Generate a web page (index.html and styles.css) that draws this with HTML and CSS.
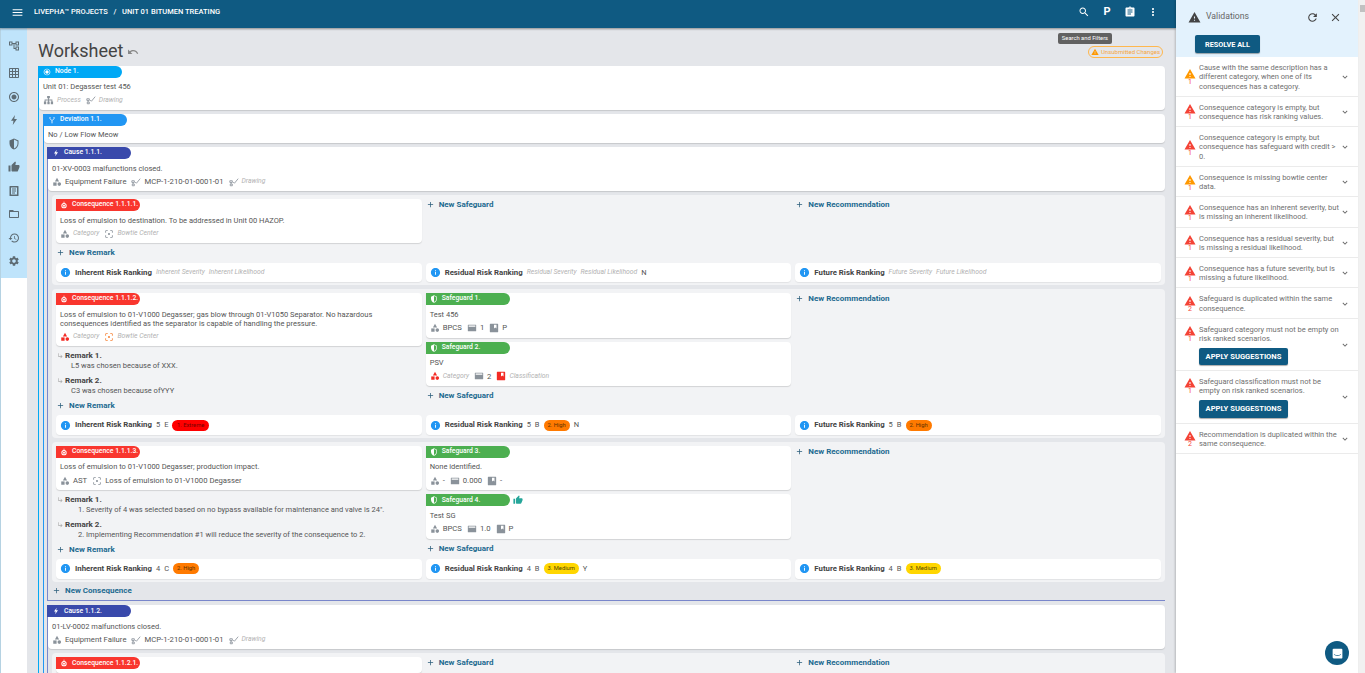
FILE: index.html
```html
<!DOCTYPE html>
<html>
<head>
    <meta charset="utf-8">
    <title>Worksheet</title>
    <link rel="stylesheet" href="styles.css">
</head>

<body>
    <svg class="defs" xmlns="http://www.w3.org/2000/svg">
        <symbol id="menu" viewBox="0 0 24 24"><path d="M3 18h18v-2H3v2zm0-5h18v-2H3v2zm0-7v2h18V6H3z"/></symbol>
        <symbol id="search" viewBox="0 0 24 24"><path d="M15.5 14h-.79l-.28-.27C15.41 12.59 16 11.11 16 9.5 16 5.91 13.09 3 9.5 3S3 5.91 3 9.5 5.91 16 9.5 16c1.61 0 3.09-.59 4.23-1.57l.27.28v.79l5 4.99L20.49 19l-4.99-5zm-6 0C7.01 14 5 11.99 5 9.5S7.01 5 9.5 5 14 7.01 14 9.5 11.99 14 9.5 14z"/></symbol>
        <symbol id="more" viewBox="0 0 24 24"><path d="M12 8c1.1 0 2-.9 2-2s-.9-2-2-2-2 .9-2 2 .9 2 2 2zm0 2c-1.1 0-2 .9-2 2s.9 2 2 2 2-.9 2-2-.9-2-2-2zm0 6c-1.1 0-2 .9-2 2s.9 2 2 2 2-.9 2-2-.9-2-2-2z"/></symbol>
        <symbol id="clip" viewBox="0 0 24 24"><path d="M19 3h-4.18C14.4 1.84 13.3 1 12 1c-1.3 0-2.4.84-2.82 2H5c-1.1 0-2 .9-2 2v14c0 1.1.9 2 2 2h14c1.1 0 2-.9 2-2V5c0-1.1-.9-2-2-2zm-7 0c.55 0 1 .45 1 1s-.45 1-1 1-1-.45-1-1 .45-1 1-1zm2 14H7v-2h7v2zm3-4H7v-2h10v2zm0-4H7V7h10v2z"/></symbol>
        <symbol id="warn" viewBox="0 0 24 24"><path d="M1 21h22L12 2 1 21zm12-3h-2v-2h2v2zm0-4h-2v-4h2v4z"/></symbol>
        <symbol id="refresh" viewBox="0 0 24 24"><path d="M17.65 6.35C16.2 4.9 14.21 4 12 4c-4.42 0-7.99 3.58-7.99 8s3.57 8 7.99 8c3.73 0 6.84-2.55 7.73-6h-2.08c-.82 2.33-3.04 4-5.65 4-3.31 0-6-2.69-6-6s2.69-6 6-6c1.66 0 3.14.69 4.22 1.78L13 11h7V4l-2.35 2.35z"/></symbol>
        <symbol id="close" viewBox="0 0 24 24"><path d="M19 6.41L17.59 5 12 10.59 6.41 5 5 6.41 10.59 12 5 17.59 6.41 19 12 13.41 17.59 19 19 17.59 13.41 12 19 6.41z"/></symbol>
        <symbol id="chev" viewBox="0 0 24 24"><path d="M16.59 8.59L12 13.17 7.41 8.59 6 10l6 6 6-6z"/></symbol>
        <symbol id="add" viewBox="0 0 24 24"><path d="M19 13h-6v6h-2v-6H5v-2h6V5h2v6h6v2z"/></symbol>
        <symbol id="info" viewBox="0 0 24 24"><path d="M12 2C6.48 2 2 6.48 2 12s4.48 10 10 10 10-4.48 10-10S17.52 2 12 2zm1 15h-2v-6h2v6zm0-8h-2V7h2v2z"/></symbol>
        <symbol id="thumb" viewBox="0 0 24 24"><path d="M1 21h4V9H1v12zm22-11c0-1.1-.9-2-2-2h-6.31l.95-4.57.03-.32c0-.41-.17-.79-.44-1.06L14.17 1 7.59 7.59C7.22 7.95 7 8.45 7 9v10c0 1.1.9 2 2 2h9c.83 0 1.54-.5 1.84-1.22l3.02-7.05c.09-.23.14-.47.14-.73v-2z"/></symbol>
        <symbol id="undo" viewBox="0 0 24 24"><path d="M12.5 8c-2.65 0-5.05.99-6.9 2.6L2 7v9h9l-3.62-3.62c1.39-1.16 3.16-1.88 5.12-1.88 3.54 0 6.55 2.31 7.6 5.5l2.37-.78C21.08 11.03 17.15 8 12.5 8z"/></symbol>
        <symbol id="bolt" viewBox="0 0 24 24"><path d="M14 2L6 13.500h5L9.500 22 18 10h-5.500z"/></symbol>
        <symbol id="history" viewBox="0 0 24 24"><path d="M13 3c-4.97 0-9 4.03-9 9H1l3.89 3.89.07.14L9 12H6c0-3.87 3.13-7 7-7s7 3.13 7 7-3.13 7-7 7c-1.93 0-3.68-.79-4.94-2.06l-1.42 1.42C8.27 19.99 10.51 21 13 21c4.97 0 9-4.03 9-9s-4.03-9-9-9zm-1 5v5l4.28 2.54.72-1.21-3.5-2.08V8H12z"/></symbol>
        <symbol id="folder" viewBox="0 0 24 24"><path d="M20 6h-8l-2-2H4c-1.1 0-1.99.9-1.99 2L2 18c0 1.1.9 2 2 2h16c1.1 0 2-.9 2-2V8c0-1.1-.9-2-2-2zm0 12H4V8h16v10z"/></symbol>
        <symbol id="grid" viewBox="0 0 24 24"><path d="M20 2H4c-1.1 0-2 .9-2 2v16c0 1.1.9 2 2 2h16c1.1 0 2-.9 2-2V4c0-1.1-.9-2-2-2zM8 20H4v-4h4v4zm0-6H4v-4h4v4zm0-6H4V4h4v4zm6 12h-4v-4h4v4zm0-6h-4v-4h4v4zm0-6h-4V4h4v4zm6 12h-4v-4h4v4zm0-6h-4v-4h4v4zm0-6h-4V4h4v4z"/></symbol>
        <symbol id="radio" viewBox="0 0 24 24"><path d="M12 7c-2.76 0-5 2.24-5 5s2.24 5 5 5 5-2.24 5-5-2.24-5-5-5zm0-5C6.48 2 2 6.48 2 12s4.48 10 10 10 10-4.48 10-10S17.52 2 12 2zm0 18c-4.42 0-8-3.58-8-8s3.58-8 8-8 8 3.58 8 8-3.58 8-8 8z"/></symbol>
        <symbol id="shield" viewBox="0 0 24 24"><path fill-rule="evenodd" d="M12 1L3 5v6c0 5.55 3.84 10.74 9 12 5.16-1.26 9-6.45 9-12V5l-9-4zm0 2.2v17.7c4-1.2 7-5.4 7-9.9V6.3z"/></symbol>
        <symbol id="tree" viewBox="0 0 24 24"><path d="M22 11V3h-7v3H9V3H2v8h7V8h2v10h4v3h7v-8h-7v3h-2V8h2v3zM4 5h3v4H4zm13 10h3v4h-3zm0-10h3v4h-3z" fill-rule="evenodd"/></symbol>
        <symbol id="book" viewBox="0 0 24 24"><path fill-rule="evenodd" d="M4 2h16a1 1 0 0 1 1 1v18a1 1 0 0 1-1 1H4a1 1 0 0 1-1-1V3a1 1 0 0 1 1-1zm2 3v14h12V5zm2 2h8v2H8zm0 4h8v2H8zm0 4h6v2H8z"/></symbol>
        <symbol id="gear" viewBox="0 0 24 24"><path d="M19.14 12.94c.04-.3.06-.61.06-.94 0-.32-.02-.64-.07-.94l2.03-1.58c.18-.14.23-.41.12-.61l-1.92-3.32c-.12-.22-.37-.29-.59-.22l-2.39.96c-.5-.38-1.03-.7-1.62-.94l-.36-2.54c-.04-.24-.24-.41-.48-.41h-3.84c-.24 0-.43.17-.47.41l-.36 2.54c-.59.24-1.13.57-1.62.94l-2.39-.96c-.22-.08-.47 0-.59.22L2.74 8.87c-.12.21-.08.47.12.61l2.03 1.58c-.05.3-.09.63-.09.94s.02.64.07.94l-2.03 1.58c-.18.14-.23.41-.12.61l1.92 3.32c.12.22.37.29.59.22l2.39-.96c.5.38 1.03.7 1.62.94l.36 2.54c.05.24.24.41.48.41h3.84c.24 0 .44-.17.47-.41l.36-2.54c.59-.24 1.13-.56 1.62-.94l2.39.96c.22.08.47 0 .59-.22l1.92-3.32c.12-.22.07-.47-.12-.61l-2.01-1.58zM12 15.6c-1.98 0-3.6-1.62-3.6-3.6s1.62-3.6 3.6-3.6 3.6 1.62 3.6 3.6-1.62 3.6-3.6 3.6z"/></symbol>
        <symbol id="cat" viewBox="0 0 24 24"><path d="M12 2l-5 8.500h10z"/><rect x="3" y="13" width="8" height="8"/><circle cx="17.500" cy="17" r="4.300"/></symbol>
        <symbol id="sitemap" viewBox="0 0 24 24"><path d="M9 2h6v5h-2v3h7.500v4H22v6h-5v-6h1.500v-2H13v2h1.500v6h-5v-6H11v-2H5.500v2H7v6H2v-6h1.500v-4H11V7H9z"/></symbol>
        <symbol id="draw" viewBox="0 0 24 24"><path fill="none" stroke="currentColor" stroke-width="2" d="M2 9h6v4H2zM5 13v4M3 17h5v4H3zM10 12l3 3 9-11"/></symbol>
        <symbol id="focus" viewBox="0 0 24 24"><path d="M12 9.500a2.500 2.500 0 1 0 0 5 2.500 2.500 0 0 0 0-5zM5 15H3v4c0 1.100.9 2 2 2h4v-2H5v-4zM5 5h4V3H5c-1.100 0-2 .9-2 2v4h2V5zm14-2h-4v2h4v4h2V5c0-1.100-.9-2-2-2zm0 16h-4v2h4c1.100 0 2-.9 2-2v-4h-2v4z"/></symbol>
        <symbol id="card" viewBox="0 0 24 24"><path fill-rule="evenodd" d="M3 4h18a1 1 0 0 1 1 1v14a1 1 0 0 1-1 1H3a1 1 0 0 1-1-1V5a1 1 0 0 1 1-1zm1 2v3h16V6z"/></symbol>
        <symbol id="class" viewBox="0 0 24 24"><path fill-rule="evenodd" d="M3 2h18a1 1 0 0 1 1 1v18a1 1 0 0 1-1 1H3a1 1 0 0 1-1-1V3a1 1 0 0 1 1-1zm9 2v9l3-2 3 2V4z"/></symbol>
        <symbol id="fork" viewBox="0 0 24 24"><path fill="none" stroke="currentColor" stroke-width="2.500" d="M6 3v5l6 6v8M18 3v5l-6 6"/></symbol>
        <symbol id="bomb" viewBox="0 0 24 24"><path fill-rule="evenodd" d="M12 6a8 8 0 1 1 0 16 8 8 0 0 1 0-16zm0 3a5 5 0 1 0 0 10 5 5 0 0 0 0-10zm-1.500-7h3v3h-3zM12 11a3 3 0 1 1 0 6 3 3 0 0 1 0-6z"/></symbol>
        <symbol id="remark" viewBox="0 0 24 24"><path d="M19 15l-6 6-1.420-1.420L15.170 16H4V4h2v10h9.170l-3.590-3.580L13 9l6 6z"/></symbol>
        <symbol id="chat" viewBox="0 0 24 24"><path fill-rule="evenodd" d="M5 3h14a2 2 0 0 1 2 2v15a1 1 0 0 1-1 1H5a2 2 0 0 1-2-2V5a2 2 0 0 1 2-2zm1 10.500l-.7 1c3.800 2.600 9.600 2.600 13.400 0l-.7-1c-3.400 2.200-8.600 2.200-12 0z"/></symbol>
    </svg>

    <div class="main">
        <header class="top">
            <svg class="i menu"><use href="#menu"/></svg>
            <div class="crumb">LIVEPHA™ PROJECTS &nbsp;&nbsp;/&nbsp;&nbsp; UNIT 01 BITUMEN TREATING</div>
            <div class="top-acts">
                <svg class="i"><use href="#search"/></svg>
                <b class="pee">P</b>
                <svg class="i"><use href="#clip"/></svg>
                <svg class="i"><use href="#more"/></svg>
            </div>
        </header>
        <div class="tip">Search and Filters</div>

        <div class="below">
            <aside class="side">
                <nav class="side-in">
                    <svg class="i"><use href="#tree"/></svg>
                    <svg class="i"><use href="#grid"/></svg>
                    <svg class="i"><use href="#radio"/></svg>
                    <svg class="i"><use href="#bolt"/></svg>
                    <svg class="i"><use href="#shield"/></svg>
                    <svg class="i"><use href="#thumb"/></svg>
                    <svg class="i"><use href="#book"/></svg>
                    <svg class="i"><use href="#folder"/></svg>
                    <svg class="i"><use href="#history"/></svg>
                    <svg class="i"><use href="#gear"/></svg>
                </nav>
            </aside>

            <main class="sheet">
                <div class="title-row">
                    <h1>Worksheet</h1>
                    <svg class="i undo"><use href="#undo"/></svg>
                    <div class="unsub"><svg class="i"><use href="#warn"/></svg>Unsubmitted Changes</div>
                </div>

                <section class="node">
                    <div class="card">
                        <div class="tag t-node"><svg class="i"><use href="#radio"/></svg>Node 1.</div>
                        <div class="txt">Unit 01: Degasser test 456</div>
                        <div class="meta">
                            <svg class="i big"><use href="#sitemap"/></svg><em>Process</em>
                            <svg class="i"><use href="#draw"/></svg><em>Drawing</em>
                        </div>
                    </div>

                    <section class="dev">
                        <div class="card">
                            <div class="tag t-dev"><svg class="i"><use href="#fork"/></svg>Deviation 1.1.</div>
                            <div class="txt">No / Low Flow Meow</div>
                        </div>

                        <section class="cause">
                            <div class="card">
                                <div class="tag t-cause"><svg class="i"><use href="#bolt"/></svg>Cause 1.1.1.</div>
                                <div class="txt">01-XV-0003 malfunctions closed.</div>
                                <div class="meta">
                                    <svg class="i"><use href="#cat"/></svg><span>Equipment Failure</span>
                                    <svg class="i"><use href="#draw"/></svg><span>MCP-1-210-01-0001-01</span>
                                    <svg class="i"><use href="#draw"/></svg><em>Drawing</em>
                                </div>
                            </div>

                            <div class="group">
                                <div class="col">
                                    <div class="card">
                                        <div class="tag t-cons"><svg class="i"><use href="#bomb"/></svg>Consequence 1.1.1.1.</div>
                                        <div class="txt">Loss of emulsion to destination. To be addressed in Unit 00 HAZOP.</div>
                                        <div class="meta">
                                            <svg class="i"><use href="#cat"/></svg><em>Category</em>
                                            <svg class="i"><use href="#focus"/></svg><em>Bowtie Center</em>
                                        </div>
                                    </div>
                                    <div class="new"><svg class="i"><use href="#add"/></svg>New Remark</div>
                                </div>
                                <div class="col">
                                    <div class="new first"><svg class="i"><use href="#add"/></svg>New Safeguard</div>
                                </div>
                                <div class="col">
                                    <div class="new first"><svg class="i"><use href="#add"/></svg>New Recommendation</div>
                                </div>
                                <div class="risk"><svg class="i"><use href="#info"/></svg><b>Inherent Risk Ranking</b><em>Inherent Severity</em><em>Inherent Likelihood</em></div>
                                <div class="risk"><svg class="i"><use href="#info"/></svg><b>Residual Risk Ranking</b><em>Residual Severity</em><em>Residual Likelihood</em><span>N</span></div>
                                <div class="risk"><svg class="i"><use href="#info"/></svg><b>Future Risk Ranking</b><em>Future Severity</em><em>Future Likelihood</em></div>
                            </div>

                            <div class="group">
                                <div class="col">
                                    <div class="card">
                                        <div class="tag t-cons"><svg class="i"><use href="#bomb"/></svg>Consequence 1.1.1.2.</div>
                                        <div class="txt">Loss of emulsion to 01-V1000 Degasser; gas blow through 01-V1050 Separator. No hazardous consequences identified as the separator is capable of handling the pressure.</div>
                                        <div class="meta">
                                            <svg class="i red"><use href="#cat"/></svg><em>Category</em>
                                            <svg class="i orange"><use href="#focus"/></svg><em>Bowtie Center</em>
                                        </div>
                                    </div>
                                    <div class="remark">
                                        <div class="rem-head"><svg class="i"><use href="#remark"/></svg>Remark 1.</div>
                                        <div class="rem-body">L5 was chosen because of XXX.</div>
                                    </div>
                                    <div class="remark">
                                        <div class="rem-head"><svg class="i"><use href="#remark"/></svg>Remark 2.</div>
                                        <div class="rem-body">C3 was chosen because ofYYY</div>
                                    </div>
                                    <div class="new"><svg class="i"><use href="#add"/></svg>New Remark</div>
                                </div>
                                <div class="col">
                                    <div class="card sg">
                                        <div class="tag t-safe"><svg class="i"><use href="#shield"/></svg>Safeguard 1.</div>
                                        <div class="txt">Test 456</div>
                                        <div class="meta">
                                            <svg class="i"><use href="#cat"/></svg><span>BPCS</span>
                                            <svg class="i"><use href="#card"/></svg><span>1</span>
                                            <svg class="i"><use href="#class"/></svg><span>P</span>
                                        </div>
                                    </div>
                                    <div class="card sg">
                                        <div class="tag t-safe"><svg class="i"><use href="#shield"/></svg>Safeguard 2.</div>
                                        <div class="txt">PSV</div>
                                        <div class="meta">
                                            <svg class="i red"><use href="#cat"/></svg><em>Category</em>
                                            <svg class="i"><use href="#card"/></svg><span>2</span>
                                            <svg class="i red"><use href="#class"/></svg><em>Classification</em>
                                        </div>
                                    </div>
                                    <div class="new"><svg class="i"><use href="#add"/></svg>New Safeguard</div>
                                </div>
                                <div class="col">
                                    <div class="new first"><svg class="i"><use href="#add"/></svg>New Recommendation</div>
                                </div>
                                <div class="risk"><svg class="i"><use href="#info"/></svg><b>Inherent Risk Ranking</b><span>5</span><span>E</span><i class="pill p-ext">1. Extreme</i></div>
                                <div class="risk"><svg class="i"><use href="#info"/></svg><b>Residual Risk Ranking</b><span>5</span><span>B</span><i class="pill p-high">2. High</i><span>N</span></div>
                                <div class="risk"><svg class="i"><use href="#info"/></svg><b>Future Risk Ranking</b><span>5</span><span>B</span><i class="pill p-high">2. High</i></div>
                            </div>

                            <div class="group">
                                <div class="col">
                                    <div class="card">
                                        <div class="tag t-cons"><svg class="i"><use href="#bomb"/></svg>Consequence 1.1.1.3.</div>
                                        <div class="txt">Loss of emulsion to 01-V1000 Degasser; production impact.</div>
                                        <div class="meta">
                                            <svg class="i"><use href="#cat"/></svg><span>AST</span>
                                            <svg class="i"><use href="#focus"/></svg><span>Loss of emulsion to 01-V1000 Degasser</span>
                                        </div>
                                    </div>
                                    <div class="remark">
                                        <div class="rem-head"><svg class="i"><use href="#remark"/></svg>Remark 1.</div>
                                        <div class="rem-body num">1. Severity of 4 was selected based on no bypass available for maintenance and valve is 24".</div>
                                    </div>
                                    <div class="remark">
                                        <div class="rem-head"><svg class="i"><use href="#remark"/></svg>Remark 2.</div>
                                        <div class="rem-body num">2. Implementing Recommendation #1 will reduce the severity of the consequence to 2.</div>
                                    </div>
                                    <div class="new"><svg class="i"><use href="#add"/></svg>New Remark</div>
                                </div>
                                <div class="col">
                                    <div class="card sg">
                                        <div class="tag t-safe"><svg class="i"><use href="#shield"/></svg>Safeguard 3.</div>
                                        <div class="txt">None identified.</div>
                                        <div class="meta">
                                            <svg class="i"><use href="#cat"/></svg><span>-</span>
                                            <svg class="i"><use href="#card"/></svg><span>0.000</span>
                                            <svg class="i"><use href="#class"/></svg><span>-</span>
                                        </div>
                                    </div>
                                    <div class="card sg">
                                        <div class="tag-row">
                                            <div class="tag t-safe"><svg class="i"><use href="#shield"/></svg>Safeguard 4.</div>
                                            <svg class="i like"><use href="#thumb"/></svg>
                                        </div>
                                        <div class="txt">Test SG</div>
                                        <div class="meta">
                                            <svg class="i"><use href="#cat"/></svg><span>BPCS</span>
                                            <svg class="i"><use href="#card"/></svg><span>1.0</span>
                                            <svg class="i"><use href="#class"/></svg><span>P</span>
                                        </div>
                                    </div>
                                    <div class="new"><svg class="i"><use href="#add"/></svg>New Safeguard</div>
                                </div>
                                <div class="col">
                                    <div class="new first"><svg class="i"><use href="#add"/></svg>New Recommendation</div>
                                </div>
                                <div class="risk"><svg class="i"><use href="#info"/></svg><b>Inherent Risk Ranking</b><span>4</span><span>C</span><i class="pill p-high">2. High</i></div>
                                <div class="risk"><svg class="i"><use href="#info"/></svg><b>Residual Risk Ranking</b><span>4</span><span>B</span><i class="pill p-med">3. Medium</i><span>Y</span></div>
                                <div class="risk"><svg class="i"><use href="#info"/></svg><b>Future Risk Ranking</b><span>4</span><span>B</span><i class="pill p-med">3. Medium</i></div>
                            </div>

                            <div class="new new-cons"><svg class="i"><use href="#add"/></svg>New Consequence</div>
                        </section>

                        <section class="cause">
                            <div class="card">
                                <div class="tag t-cause"><svg class="i"><use href="#bolt"/></svg>Cause 1.1.2.</div>
                                <div class="txt">01-LV-0002 malfunctions closed.</div>
                                <div class="meta">
                                    <svg class="i"><use href="#cat"/></svg><span>Equipment Failure</span>
                                    <svg class="i"><use href="#draw"/></svg><span>MCP-1-210-01-0001-01</span>
                                    <svg class="i"><use href="#draw"/></svg><em>Drawing</em>
                                </div>
                            </div>

                            <div class="group">
                                <div class="col">
                                    <div class="card">
                                        <div class="tag t-cons"><svg class="i"><use href="#bomb"/></svg>Consequence 1.1.2.1.</div>
                                    </div>
                                </div>
                                <div class="col">
                                    <div class="new first"><svg class="i"><use href="#add"/></svg>New Safeguard</div>
                                </div>
                                <div class="col">
                                    <div class="new first"><svg class="i"><use href="#add"/></svg>New Recommendation</div>
                                </div>
                            </div>
                        </section>
                    </section>
                </section>
            </main>
        </div>
    </div>

    <aside class="panel">
        <div class="panel-head">
            <div class="panel-title">
                <svg class="i"><use href="#warn"/></svg>
                <span>Validations</span>
                <svg class="i acts"><use href="#refresh"/></svg>
                <svg class="i"><use href="#close"/></svg>
            </div>
            <button class="btn resolve">RESOLVE ALL</button>
        </div>
        <div class="val">
            <div class="v-ico amber"><svg class="i"><use href="#warn"/></svg><small>1</small></div>
            <div class="v-txt">Cause with the same description has a different category, when one of its consequences has a category.</div>
            <svg class="i chev"><use href="#chev"/></svg>
        </div>
        <div class="val">
            <div class="v-ico"><svg class="i"><use href="#warn"/></svg><small>1</small></div>
            <div class="v-txt">Consequence category is empty, but consequence has risk ranking values.</div>
            <svg class="i chev"><use href="#chev"/></svg>
        </div>
        <div class="val">
            <div class="v-ico"><svg class="i"><use href="#warn"/></svg><small>1</small></div>
            <div class="v-txt">Consequence category is empty, but consequence has safeguard with credit &gt; 0.</div>
            <svg class="i chev"><use href="#chev"/></svg>
        </div>
        <div class="val">
            <div class="v-ico amber"><svg class="i"><use href="#warn"/></svg><small>1</small></div>
            <div class="v-txt">Consequence is missing bowtie center data.</div>
            <svg class="i chev"><use href="#chev"/></svg>
        </div>
        <div class="val">
            <div class="v-ico"><svg class="i"><use href="#warn"/></svg><small>1</small></div>
            <div class="v-txt">Consequence has an inherent severity, but is missing an inherent likelihood.</div>
            <svg class="i chev"><use href="#chev"/></svg>
        </div>
        <div class="val">
            <div class="v-ico"><svg class="i"><use href="#warn"/></svg><small>1</small></div>
            <div class="v-txt">Consequence has a residual severity, but is missing a residual likelihood.</div>
            <svg class="i chev"><use href="#chev"/></svg>
        </div>
        <div class="val">
            <div class="v-ico"><svg class="i"><use href="#warn"/></svg><small>1</small></div>
            <div class="v-txt">Consequence has a future severity, but is missing a future likelihood.</div>
            <svg class="i chev"><use href="#chev"/></svg>
        </div>
        <div class="val">
            <div class="v-ico"><svg class="i"><use href="#warn"/></svg><small>2</small></div>
            <div class="v-txt">Safeguard is duplicated within the same consequence.</div>
            <svg class="i chev"><use href="#chev"/></svg>
        </div>
        <div class="val has-btn">
            <div class="v-ico"><svg class="i"><use href="#warn"/></svg><small>1</small></div>
            <div class="v-txt">Safeguard category must not be empty on risk ranked scenarios.<button class="btn apply">APPLY SUGGESTIONS</button></div>
            <svg class="i chev"><use href="#chev"/></svg>
        </div>
        <div class="val has-btn">
            <div class="v-ico"><svg class="i"><use href="#warn"/></svg><small>1</small></div>
            <div class="v-txt">Safeguard classification must not be empty on risk ranked scenarios.<button class="btn apply">APPLY SUGGESTIONS</button></div>
            <svg class="i chev"><use href="#chev"/></svg>
        </div>
        <div class="val">
            <div class="v-ico"><svg class="i"><use href="#warn"/></svg><small>2</small></div>
            <div class="v-txt">Recommendation is duplicated within the same consequence.</div>
            <svg class="i chev"><use href="#chev"/></svg>
        </div>
    </aside>

    <div class="scroll"><div class="thumb"></div></div>
    <div class="fab"><svg class="i"><use href="#chat"/></svg></div>
</body>

</html>
```

FILE: styles.css
```css
* { box-sizing: border-box; }

html, body {
    margin: 0;
    height: 673px;
    overflow: hidden;
}

body {
    display: flex;
    font-family: Roboto, "Liberation Sans", sans-serif;
    font-size: 7.500px;
    line-height: 9.300px;
    color: #555;
    background: #fff;
}

.defs { display: none; }

.i {
    width: 10px;
    height: 10px;
    flex: none;
    fill: currentColor;
}

/* main column */
.main {
    position: relative;
    width: 1176px;
    height: 673px;
    display: flex;
    flex-direction: column;
}

.top {
    height: 28px;
    flex: none;
    display: flex;
    align-items: center;
    padding: 0 17px 4px 11px;
    background: #0f5a82;
    color: #fff;
    box-shadow: 0 1px 2px #0006;
    z-index: 3;
}

.menu { width: 13px; height: 13px; }

.crumb {
    margin-left: 10px;
    font-size: 7.500px;
    font-weight: 500;
    white-space: nowrap;
}

.top-acts {
    margin-left: auto;
    display: flex;
    align-items: center;
    gap: 11px;
}

.top-acts .i { width: 12px; height: 12px; }

.pee {
    font-size: 11px;
    width: 12px;
    text-align: center;
}

.tip {
    position: absolute;
    left: 1058px;
    top: 33px;
    width: 54px;
    height: 11px;
    background: #616161;
    color: #fff;
    border-radius: 2px;
    font-size: 5.800px;
    line-height: 11px;
    text-align: center;
    z-index: 4;
}

.below {
    flex: 1;
    display: flex;
    min-height: 0;
}

.side {
    width: 27px;
    flex: none;
    border-left: 1px solid #b5d2e2;
    background: #fff;
}

.side-in {
    height: 250px;
    padding-top: 6px;
    display: flex;
    flex-direction: column;
    align-items: center;
    background: #bfe4fb;
    color: #5d6b73;
}

.side-in .i {
    width: 12px;
    height: 12px;
    margin: 6px 0 5.500px;
}

.side-in .i:first-child { margin-bottom: 9px; }

.sheet {
    flex: 1;
    min-width: 0;
    padding: 0 11px;
    background: #e4e6ea;
    overflow: hidden;
}

.title-row {
    height: 37.500px;
    display: flex;
    align-items: center;
    padding-top: 8px;
}

h1 {
    margin: 0;
    font-size: 18px;
    line-height: 22px;
    font-weight: 400;
    color: #444;
}

.undo {
    width: 12px;
    height: 12px;
    margin: 3px 0 0 4px;
    color: #888;
}

.unsub {
    margin: 2px 2px 0 auto;
    width: 75px;
    height: 12px;
    display: flex;
    align-items: center;
    justify-content: center;
    gap: 2px;
    border: 1px solid #ffb74d;
    border-radius: 6px;
    font-size: 6px;
    color: #f5a742;
}

.unsub .i {
    width: 8px;
    height: 8px;
    color: #ff9800;
}

/* nesting */
.node { border-left: 1px solid #03a9f4; }

.dev {
    margin-left: 4px;
    margin-top: 4px;
    border-left: 1px solid #2196f3;
}

.cause {
    margin-left: 3px;
    margin-top: 4px;
    border-left: 1px solid #7986cb;
    border-bottom: 1px solid #7986cb;
}

.cause + .cause {
    border-bottom: 0;
}

/* cards */
.card {
    background: #fff;
    border-radius: 0 4px 4px 4px;
    box-shadow: 0 1px 1px #0002;
    padding-bottom: 3.500px;
}

.tag {
    width: 84px;
    height: 12px;
    display: flex;
    align-items: center;
    gap: 4px;
    padding-left: 4px;
    border-radius: 0 6px 6px 0;
    color: #fff;
    font-size: 6.800px;
    font-weight: 500;
    white-space: nowrap;
}

.tag .i { width: 8px; height: 8px; }

.t-node { background: #00a8f5; margin-left: -1px; padding-left: 5px; }
.t-dev { background: #2196f3; margin-left: -1px; padding-left: 5px; }
.t-cause { background: #3949ab; margin-left: -1px; padding-left: 5px; }
.t-cons { background: #f9362e; }
.t-safe { background: #4caf50; }

.tag-row {
    display: flex;
    align-items: center;
    gap: 3px;
}

.like { color: #26a69a; }

.txt {
    padding: 4.500px 4px 0;
    min-height: 14px;
}

.meta {
    height: 11.500px;
    margin-top: 3px;
    padding: 0 4px;
    display: flex;
    align-items: center;
    gap: 3px;
    color: #555;
    font-size: 7.700px;
}

.meta .i { color: #8a929a; }
.meta .i.big { width: 11px; height: 11px; }
.meta .i.red { color: #f32b25; }
.meta .i.orange { color: #f7853a; }
.meta .i + * { margin-right: 2px; }

em {
    font-size: 6.800px;
    color: #b2b2b2;
}

/* consequence rows */
.group {
    margin: 4px 0 0 4px;
    padding: 4px 4px 3px;
    display: grid;
    grid-template-columns: repeat(3, 1fr);
    column-gap: 4px;
    background: #f2f3f5;
    border-radius: 4px;
}

.col { min-width: 0; }

.sg { padding-bottom: 4px; }
.sg + .sg { margin-top: 4px; }

.new {
    height: 19.500px;
    display: flex;
    align-items: center;
    gap: 4px;
    font-size: 8px;
    color: #1c6a90;
    font-weight: 700;
}

.new.first {
    height: 11px;
}

.new .i {
    width: 9px;
    height: 9px;
    color: #2c5f7c;
}

.new-cons {
    margin-left: 4px;
    height: 18.500px;
}

.remark { margin-top: 4.300px; }
.remark + .remark { margin-top: 4.500px; }

.rem-head {
    height: 10px;
    display: flex;
    align-items: center;
    gap: 1px;
    padding-left: 1px;
    font-size: 8px;
    font-weight: 700;
    color: #444;
}

.rem-head .i {
    width: 7px;
    height: 7px;
    color: #aaa;
}

.rem-body {
    height: 10.500px;
    padding: 1px 0 0 15px;
}

.rem-body.num { padding-left: 22px; }

.risk {
    height: 19.500px;
    padding-left: 4px;
    display: flex;
    align-items: center;
    gap: 4px;
    background: #fff;
    border-radius: 4px;
    box-shadow: 0 1px 1px #0001;
}

.risk .i {
    width: 11px;
    height: 11px;
    color: #2196f3;
}

.risk b {
    font-size: 7.800px;
    font-weight: 700;
    color: #444;
}

.pill {
    height: 11px;
    padding: 0 4px;
    border-radius: 6px;
    font-style: normal;
    font-size: 5.800px;
    line-height: 11px;
    color: #5a3000;
}

.p-ext { background: #f00; color: #7a0000; padding: 0 4.500px; }
.p-high { background: #ff7a00; }
.p-med { background: #ffd600; color: #554800; }

/* validations panel */
.panel {
    width: 182px;
    flex: none;
    height: 673px;
    box-shadow: -1px 0 2px #0003;
    z-index: 5;
    background: #fff;
}

.panel-head {
    height: 57px;
    padding: 12px 0 0 12px;
    background: #e3f2fd;
}

.panel-title {
    display: flex;
    align-items: center;
    height: 10px;
    font-size: 8.700px;
    color: #666;
}

.panel-title .i {
    width: 13px;
    height: 13px;
    color: #444;
}

.panel-title span { margin-left: 5px; }

.panel-title .acts { margin: 0 10px 0 auto; }
.panel-title .i:last-child { margin-right: 16px; }

.btn {
    display: block;
    padding: 0;
    border: none;
    border-radius: 2px;
    background: #0f5a82;
    color: #fff;
    font-family: inherit;
    font-weight: 700;
    font-size: 7.600px;
    box-shadow: 0 1px 1px #0005;
}

.resolve {
    width: 65px;
    height: 18px;
    margin: 13px 0 0 7px;
    font-size: 7.300px;
}

.apply {
    width: 89px;
    height: 17.500px;
    margin: 4.500px 0 0;
}

.val {
    display: flex;
    align-items: center;
    gap: 3px;
    padding: 6px 6px 4.800px 8px;
    border-bottom: 1px solid #ebebeb;
}

.v-ico {
    width: 12px;
    flex: none;
    color: #f44336;
    display: flex;
    flex-direction: column;
    align-items: center;
}

.has-btn .v-ico { align-self: flex-start; }

.v-ico .i {
    width: 12px;
    height: 12px;
}

.v-ico.amber .i { color: #ff9800; }

.v-ico small {
    font-size: 7px;
    line-height: 5px;
    color: #f44336;
}

.v-txt {
    width: 141px;
    flex: none;
    color: #707070;
}

.chev {
    width: 10px;
    height: 10px;
    margin-left: -3px;
    color: #666;
}

.scroll {
    flex: 1;
    background: #f1f1f1;
    padding: 5px 0 0 2px;
}

.thumb {
    height: 7px;
    background: #c1c1c1;
}

.fab {
    position: absolute;
    left: 1325px;
    top: 641px;
    width: 24px;
    height: 24px;
    border-radius: 50%;
    background: #0f5a82;
    color: #fff;
    display: flex;
    align-items: center;
    justify-content: center;
    z-index: 6;
}

.fab .i { width: 13px; height: 13px; }
```
